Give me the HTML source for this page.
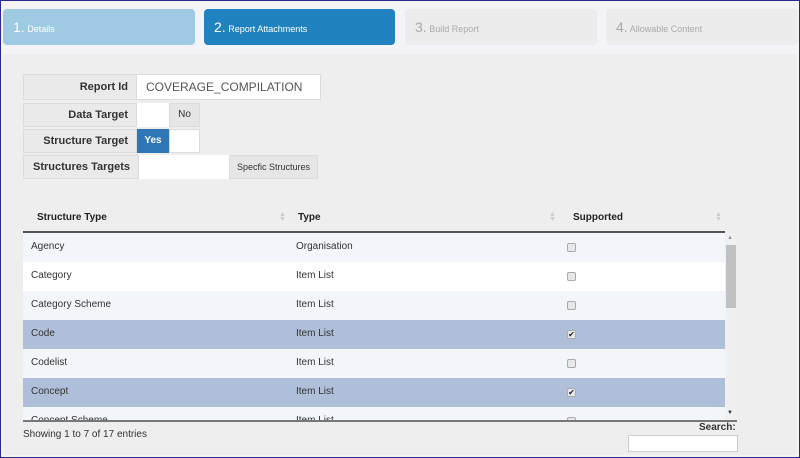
<!DOCTYPE html>
<html><head><style>
*{box-sizing:border-box;margin:0;padding:0}
body{width:800px;height:458px;overflow:hidden;font-family:"Liberation Sans",Arial,sans-serif;background:#f3f3f8;position:relative;border:1px solid #2a2a8a}
.a{position:absolute}
.tab{position:absolute;top:8px;height:36px;border-radius:4px;font-size:9px;line-height:36px;padding-left:10px;color:#fff}
.tab b{font-weight:normal;font-size:14px}
.lbl{position:absolute;left:22px;background:#eaeaea;border:1px solid #dcdcdc;font-weight:bold;font-size:11px;color:#333;text-align:right;padding-right:8px}
.row{position:absolute;left:0;width:702px;height:29px;font-size:10px;color:#333;line-height:27px}
.row span{position:absolute}
.cb{position:absolute;left:544px;top:10px;width:9px;height:9px;border:1px solid #aaa;border-radius:2px;background:#e8e8e8;font-size:8px;line-height:7px;text-align:center;color:#222}
.th{position:absolute;top:211px;font-size:10px;font-weight:bold;color:#222}
.sort{position:absolute;top:211px;font-size:7px;color:#ccc;line-height:5px}
</style></head><body>
<div class="tab" style="left:2px;width:192px;background:#9ecbe3"><b>1.</b> Details</div>
<div class="tab" style="left:203px;width:191px;background:#2182c0"><b>2.</b> Report Attachments</div>
<div class="tab" style="left:404px;width:192px;background:#ececec;color:#aaa"><b>3.</b> Build Report</div>
<div class="tab" style="left:605px;width:192px;background:#ececec;color:#aaa"><b>4.</b> Allowable Content</div>
<div class="a" style="left:2px;top:53px;width:794px;height:401px;background:#eeeeee;border-radius:3px"></div>

<div class="lbl" style="top:73px;width:114px;height:26px;line-height:24px">Report Id</div>
<div class="a" style="left:135px;top:73px;width:185px;height:26px;background:#fff;border:1px solid #dcdcdc;font-size:12px;color:#555;line-height:24px;padding-left:9px">COVERAGE_COMPILATION</div>

<div class="lbl" style="top:102px;width:114px;height:24px;line-height:22px">Data Target</div>
<div class="a" style="left:136px;top:102px;width:32px;height:24px;background:#fff"></div>
<div class="a" style="left:168px;top:102px;width:31px;height:24px;background:#e6e6e6;border:1px solid #dcdcdc;font-size:10px;color:#333;line-height:22px;text-align:center">No</div>

<div class="lbl" style="top:128px;width:114px;height:24px;line-height:22px">Structure Target</div>
<div class="a" style="left:136px;top:128px;width:32px;height:24px;background:#2e76b6;color:#fff;font-size:10px;font-weight:bold;line-height:24px;text-align:center">Yes</div>
<div class="a" style="left:168px;top:128px;width:31px;height:24px;background:#fff;border:1px solid #dcdcdc"></div>

<div class="lbl" style="top:154px;width:116px;height:24px;line-height:22px">Structures Targets</div>
<div class="a" style="left:138px;top:154px;width:90px;height:24px;background:#fff"></div>
<div class="a" style="left:228px;top:154px;width:89px;height:24px;background:#e6e6e6;border:1px solid #dcdcdc;font-size:9px;color:#333;line-height:22px;text-align:center">Specfic Structures</div>

<div class="th" style="left:36px">Structure Type</div>
<div class="th" style="left:297px">Type</div>
<div class="th" style="left:572px">Supported</div>
<div class="sort" style="left:278px">▲<br>▼</div>
<div class="sort" style="left:548px">▲<br>▼</div>
<div class="sort" style="left:714px">▲<br>▼</div>
<div class="a" style="left:22px;top:230px;width:702px;height:2px;background:#555"></div>

<div class="a" style="left:22px;top:232px;width:702px;height:188px;overflow:hidden">
<div class="row" style="top:0;background:#f2f5fa"><span style="left:8px">Agency</span><span style="left:273px">Organisation</span><div class="cb"></div></div>
<div class="row" style="top:29px;background:#fff"><span style="left:8px">Category</span><span style="left:273px">Item List</span><div class="cb"></div></div>
<div class="row" style="top:58px;background:#f2f5fa"><span style="left:8px">Category Scheme</span><span style="left:273px">Item List</span><div class="cb"></div></div>
<div class="row" style="top:87px;background:#b0bfd9"><span style="left:8px">Code</span><span style="left:273px">Item List</span><div class="cb">✔</div></div>
<div class="row" style="top:116px;background:#f2f5fa"><span style="left:8px">Codelist</span><span style="left:273px">Item List</span><div class="cb"></div></div>
<div class="row" style="top:145px;background:#b0bfd9"><span style="left:8px">Concept</span><span style="left:273px">Item List</span><div class="cb">✔</div></div>
<div class="row" style="top:174px;background:#f2f5fa"><span style="left:8px">Concept Scheme</span><span style="left:273px">Item List</span><div class="cb"></div></div>
</div>
<div class="a" style="left:724px;top:232px;width:12px;height:188px;background:#f0f0f0"></div>
<div class="a" style="left:725px;top:244px;width:10px;height:63px;background:#c1c1c1"></div>
<div class="a" style="left:726px;top:234px;font-size:6px;color:#999">▲</div>
<div class="a" style="left:726px;top:409px;font-size:6px;color:#333">▼</div>
<div class="a" style="left:22px;top:419px;width:714px;height:2px;background:#777"></div>

<div class="a" style="left:22px;top:428px;font-size:10px;color:#333">Showing 1 to 7 of 17 entries</div>
<div class="a" style="left:698px;top:421px;font-size:10px;font-weight:bold;color:#333">Search:</div>
<div class="a" style="left:627px;top:434px;width:110px;height:17px;background:#fff;border:1px solid #ccc"></div>
</body></html>
